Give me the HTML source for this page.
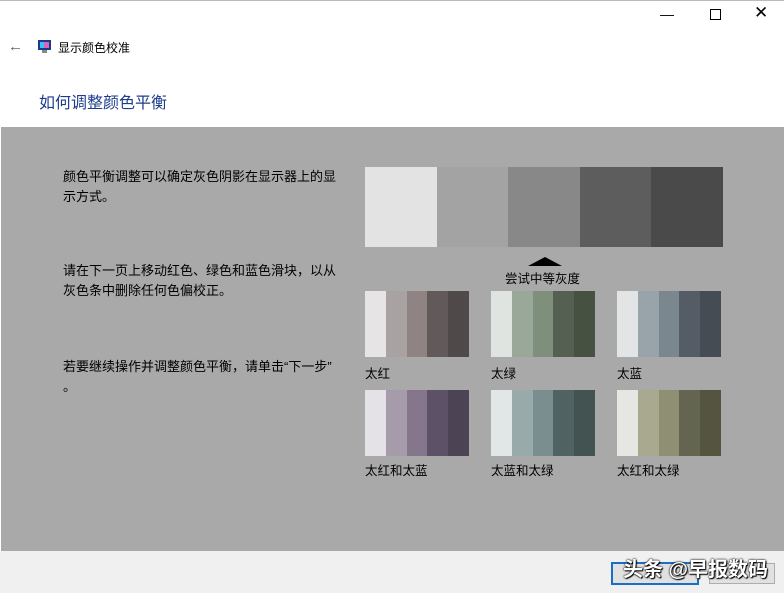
<!DOCTYPE html><html><head><meta charset="utf-8"><style>
body{margin:0;width:784px;height:593px;background:#fff;position:relative;overflow:hidden;font-family:"Liberation Sans","Noto Sans CJK SC",sans-serif;}
.a{position:absolute}
.sw{position:absolute;display:flex}
.sw div{flex:1}
.t{position:absolute;font-size:13px;color:#000;line-height:20px}
.l{position:absolute;font-size:12.5px;color:#000}
</style></head><body>
<div class="a" style="left:0;top:0;width:784px;height:1px;background:#bbb"></div>
<div class="a" style="left:660px;top:6px;font-size:14px">&#8212;</div>
<div class="a" style="left:710px;top:9px;width:9px;height:9px;border:1px solid #000"></div>
<div class="a" style="left:754px;top:3px;font-size:17px">&#x2715;</div>
<div class="a" style="left:8px;top:38px;font-size:15px;color:#666">&#8592;</div>
<svg class="a" style="left:37px;top:39px" width="15" height="15"><rect x="1" y="1" width="13" height="10" fill="#1a3a8a"/><rect x="3" y="3" width="9" height="6" fill="#e060c0"/><rect x="3" y="3" width="4" height="6" fill="#40c0f0"/><rect x="5" y="11" width="5" height="3" fill="#888"/></svg>
<div class="a" style="left:58px;top:39px;font-size:12px">显示颜色校准</div>
<div class="a" style="left:39px;top:89px;font-size:16px;color:#1c3c8c">如何调整颜色平衡</div>
<div class="a" style="left:1px;top:127px;width:783px;height:424px;background:#a9a9a9"></div>
<div class="a" style="left:0;top:551px;width:784px;height:42px;background:#f0f0f0"></div>
<div class="t" style="left:63px;top:167px;width:276px">颜色平衡调整可以确定灰色阴影在显示器上的显示方式。</div>
<div class="t" style="left:63px;top:261px;width:276px">请在下一页上移动红色、绿色和蓝色滑块，以从灰色条中删除任何色偏校正。</div>
<div class="t" style="left:63px;top:357px;width:276px">若要继续操作并调整颜色平衡，请单击“下一步”<br>。</div>
<div class="sw" style="left:365px;top:167px;width:358px;height:80px"><div style="background:#e3e3e3"></div><div style="background:#a3a3a3"></div><div style="background:#888"></div><div style="background:#5d5d5d"></div><div style="background:#4a4a4a"></div></div>
<div class="a" style="left:528px;top:257px;width:0;height:0;border-left:17px solid transparent;border-right:17px solid transparent;border-bottom:9px solid #000"></div>
<div class="l" style="left:505px;top:268px">尝试中等灰度</div>
<div class="sw" style="left:365px;top:291px;width:104px;height:66px"><div style="background:#e6e4e5"></div><div style="background:#a9a2a2"></div><div style="background:#8f8384"></div><div style="background:#625a5a"></div><div style="background:#4f4949"></div></div>
<div class="sw" style="left:491px;top:291px;width:104px;height:66px"><div style="background:#e0e4e1"></div><div style="background:#99a898"></div><div style="background:#7e8f7c"></div><div style="background:#566052"></div><div style="background:#475141"></div></div>
<div class="sw" style="left:617px;top:291px;width:104px;height:66px"><div style="background:#e2e4e5"></div><div style="background:#99a3aa"></div><div style="background:#7b878f"></div><div style="background:#545c65"></div><div style="background:#464c54"></div></div>
<div class="sw" style="left:365px;top:390px;width:104px;height:66px"><div style="background:#e4e2e7"></div><div style="background:#a69baa"></div><div style="background:#86768c"></div><div style="background:#5c5166"></div><div style="background:#4c4455"></div></div>
<div class="sw" style="left:491px;top:390px;width:104px;height:66px"><div style="background:#e1e6e6"></div><div style="background:#98aaaa"></div><div style="background:#7b8e8f"></div><div style="background:#506261"></div><div style="background:#435352"></div></div>
<div class="sw" style="left:617px;top:390px;width:104px;height:66px"><div style="background:#e6e6e2"></div><div style="background:#a9a990"></div><div style="background:#8f8f74"></div><div style="background:#646550"></div><div style="background:#545441"></div></div>
<div class="l" style="left:365px;top:363px">太红</div>
<div class="l" style="left:491px;top:363px">太绿</div>
<div class="l" style="left:617px;top:363px">太蓝</div>
<div class="l" style="left:365px;top:460px">太红和太蓝</div>
<div class="l" style="left:491px;top:460px">太蓝和太绿</div>
<div class="l" style="left:617px;top:460px">太红和太绿</div>
<div class="a" style="left:611px;top:562px;width:84px;height:19px;border:2px solid #1a6fc4;background:#e1e1e1"></div>
<div class="a" style="left:709px;top:563px;width:64px;height:19px;border:1px solid #adadad;background:#e1e1e1"></div>
<div class="a" style="left:623px;top:553px;font-size:20px;font-weight:bold;color:#fff;text-shadow:0 0 2px #000,0 0 1px #000,1px 1px 1px #000">头条 @早报数码</div>
</body></html>
